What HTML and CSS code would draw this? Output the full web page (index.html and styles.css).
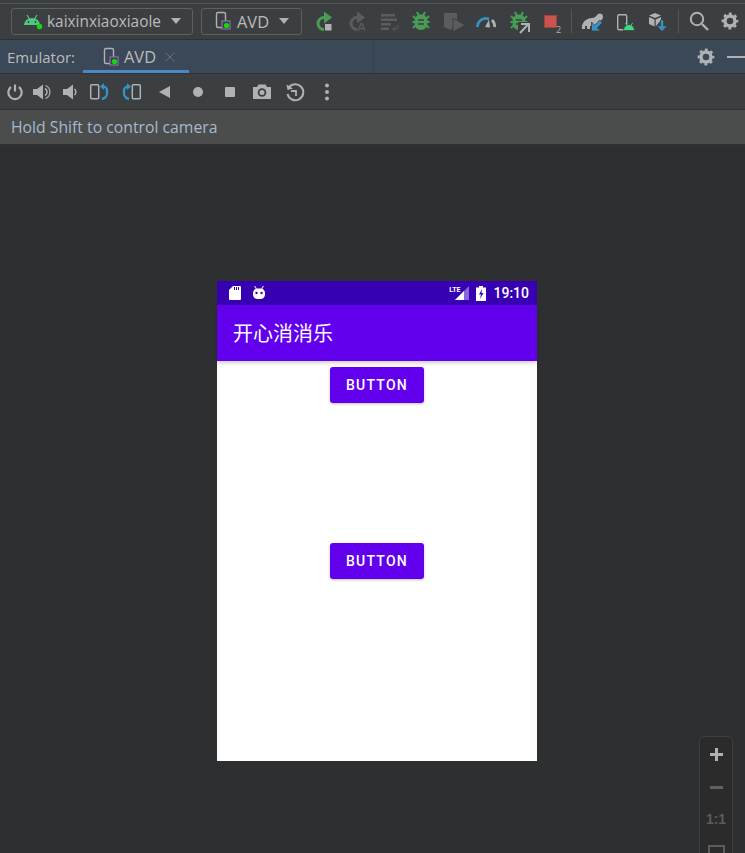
FILE: index.html
```html
<!DOCTYPE html>
<html lang="en">
<head>
  <meta charset="UTF-8" />
  <meta name="viewport" content="width=device-width, initial-scale=1.0" />
  <title>Emulator - AVD</title>
  <link rel="stylesheet" href="styles.css">
</head>
<body>
  <svg class="sprites" width="0" height="0">
    <symbol id="gear" viewBox="0 0 24 24">
      <circle cx="12" cy="12" r="5" fill="none" stroke="currentColor" stroke-width="3.4" />
      <circle cx="12" cy="12" r="7.2" fill="none" stroke="currentColor" stroke-width="2.4" stroke-dasharray="2.83 2.83" stroke-dashoffset="1.4" />
    </symbol>
    <symbol id="device" viewBox="0 0 24 24">
      <rect x="5.500" y="3.500" width="9" height="15" rx="1.500" fill="none" stroke="#afb1b3" stroke-width="1.400" />
      <rect x="11" y="12" width="8" height="8" fill="#3c3f41" stroke="#8a6fb0" stroke-width="1.200" />
      <circle cx="15.500" cy="16.500" r="2.600" fill="#0fdc0f" />
    </symbol>
    <symbol id="bug" viewBox="0 0 24 24">
      <path d="M4 7l3 3M20 7l-3 3M3.500 13h3M20.500 13h-3M4 19l3-3M20 19l-3-3M8 3l2 4M16 3l-2 4" fill="none" stroke="#499c54" stroke-width="2" />
      <path d="M12 5.500c4 0 6.500 2.500 6.500 7.500s-2.500 8-6.500 8-6.500-3-6.500-8 2.500-7.500 6.500-7.500z" fill="#499c54" />
      <path d="M9 11h6M9 15h6" stroke="#3c3f41" stroke-width="1.500" />
    </symbol>
  </svg>

  <div class="top-edge"></div>

  <!-- Main toolbar -->
  <header class="main-toolbar">
    <div class="combo combo-app">
      <svg width="20" height="18" viewBox="0 0 20 18">
        <path d="M1 13a8 7 0 0 1 16 0z" fill="#4fc97f" />
        <path d="M4 3l2.500 4M14 3l-2.500 4" stroke="#4fc97f" stroke-width="1.200" />
        <circle cx="5.500" cy="10" r="1" fill="#3c3f41" />
        <circle cx="12.500" cy="10" r="1" fill="#3c3f41" />
        <circle cx="16.500" cy="14.500" r="2.700" fill="#0fdc0f" />
      </svg>
      <span class="combo-label">kaixinxiaoxiaole</span>
      <span class="caret"></span>
    </div>
    <div class="combo combo-avd">
      <svg class="ico" width="24" height="24"><use href="#device" /></svg>
      <span class="combo-label">AVD</span>
      <span class="caret"></span>
    </div>

    <div class="tools">
      <span class="tool">
        <svg width="24" height="24" viewBox="0 0 24 24">
          <path d="M13 8.500h-1a6 6 0 0 0 0 12" fill="none" stroke="#499c54" stroke-width="3" />
          <path d="M12 2.500l8 6-8 6z" fill="#499c54" />
          <rect x="13" y="15" width="6.500" height="6.500" fill="#afb1b3" />
        </svg>
      </span>
      <span class="tool">
        <svg width="24" height="24" viewBox="0 0 24 24">
          <path d="M13 8.500h-1a6 6 0 0 0 0 12" fill="none" stroke="#5a5d5f" stroke-width="3" />
          <path d="M12 2.500l8 6-8 6z" fill="#5a5d5f" />
          <rect x="12" y="13.500" width="9" height="9" fill="#3c3f41" />
          <path d="M13 22l3-7.500h1l3 7.500M14.200 19.500h4.600" fill="none" stroke="#5a5d5f" stroke-width="1.300" />
        </svg>
      </span>
      <span class="tool">
        <svg width="24" height="24" viewBox="0 0 24 24">
          <path d="M4 5h14v2.500H4zM4 9.500h16V12H4zM4 14h10v2.500H4zM4 18.500h8V21H4z" fill="#5a5d5f" />
          <path d="M21 16v2a2 2 0 0 1-2 2h-3M18 17.500L15.500 20l2.500 2" fill="none" stroke="#5a5d5f" stroke-width="1" />
        </svg>
      </span>
      <span class="tool"><svg width="24" height="24"><use href="#bug" /></svg></span>
      <span class="tool">
        <svg width="24" height="24" viewBox="0 0 24 24">
          <path d="M2 4h13v10l-6 7-7-3z" fill="#5a5d5f" />
          <path d="M11 9l12 7-12 7z" fill="#5a5d5f" stroke="#3c3f41" stroke-width="1" />
        </svg>
      </span>
      <span class="tool">
        <svg width="24" height="24" viewBox="0 0 24 24">
          <path d="M3.500 18a8.500 8.500 0 0 1 11.500-8" fill="none" stroke="#3592c4" stroke-width="2.800" />
          <path d="M18 11a8.500 8.500 0 0 1 2.500 7" fill="none" stroke="#afb1b3" stroke-width="2.800" />
          <path d="M11 18l4-7.500 1 8z" fill="#afb1b3" />
        </svg>
      </span>
      <span class="tool">
        <svg width="24" height="24"><use href="#bug" /></svg>
        <svg class="tool-badge" width="12" height="12" viewBox="0 0 12 12">
          <rect width="12" height="12" fill="#3c3f41" />
          <path d="M3 2h8v8M10 2.500L2 11" fill="none" stroke="#afb1b3" stroke-width="2" />
        </svg>
      </span>
      <span class="tool">
        <span class="stop-square"></span>
        <span class="stop-count">2</span>
      </span>
    </div>
    <span class="sep"></span>
    <div class="tools tools-wide">
      <span class="tool">
        <svg width="24" height="24" viewBox="0 0 24 24">
          <path d="M1 20c-1-6 4-11 10-11 3 0 4-2 6-4 2-1.500 5 0 5 2.500S21 11 19.500 11.500V15l-7 5v-3H9v3H6v-3H4v3z" fill="#afb1b3" />
          <path d="M10.500 22v-9l3.200 3.200 5-5 2.600 2.600-5 5 3.200 3.200z" fill="#3592c4" stroke="#3c3f41" stroke-width=".8" />
        </svg>
      </span>
      <span class="tool">
        <svg width="24" height="24" viewBox="0 0 24 24">
          <rect x="2.700" y="5.700" width="9" height="15" rx="1.500" fill="none" stroke="#afb1b3" stroke-width="1.400" />
          <path d="M8.500 21.500a5.500 6 0 0 1 11 0z" fill="#3ddc84" stroke="#3c3f41" stroke-width=".8" />
          <path d="M10.500 14l1.500 2.500M17.500 14L16 16.500" stroke="#3ddc84" stroke-width="1" />
        </svg>
      </span>
      <span class="tool">
        <svg width="24" height="24" viewBox="0 0 24 24">
          <path d="M6 4l6 2.500L6 9 0 6.500z" fill="#afb1b3" />
          <path d="M0 8l5.500 2.400v7L0 15zM6.700 10.400L12 8v3l-5.300 6.400z" fill="#afb1b3" />
          <path d="M11.500 11h3v6h3.500l-5 5.500-5-5.500h3.500z" fill="#3592c4" stroke="#3c3f41" stroke-width=".6" />
        </svg>
      </span>
    </div>
    <span class="sep sep-right"></span>
    <span class="tool tool-search">
      <svg width="24" height="24" viewBox="0 0 24 24">
        <circle cx="10" cy="10" r="6.200" fill="none" stroke="#afb1b3" stroke-width="2" />
        <path d="M15 15l6 6" stroke="#afb1b3" stroke-width="2.400" />
      </svg>
    </span>
    <span class="tool tool-gear"><svg width="24" height="24"><use href="#gear" /></svg></span>
  </header>

  <!-- Tool window header -->
  <nav class="tab-row">
    <span class="tab-title">Emulator:</span>
    <div class="tab">
      <svg width="24" height="24"><use href="#device" /></svg>
      <span class="tab-label">AVD</span>
      <svg class="tab-close" width="10" height="10" viewBox="0 0 10 10">
        <path d="M.5.500l9 9M9.500.500l-9 9" stroke="#6e7072" stroke-width="1" />
      </svg>
    </div>
    <span class="tab-divider"></span>
    <span class="tab-gear"><svg width="24" height="24"><use href="#gear" /></svg></span>
    <span class="tab-minimize"></span>
  </nav>

  <!-- Emulator controls -->
  <div class="emu-toolbar">
    <span class="emu-btn">
      <svg width="20" height="20" viewBox="0 0 20 20">
        <path d="M6 5a6.700 6.700 0 1 0 8 0" fill="none" stroke="#afb1b3" stroke-width="2.200" />
        <path d="M10 2.500v7" stroke="#afb1b3" stroke-width="2.200" />
      </svg>
    </span>
    <span class="emu-btn">
      <svg width="20" height="20" viewBox="0 0 20 20">
        <path d="M0 7h4l6-4.500v15L4 13H0z" fill="#afb1b3" />
        <path d="M12 6.500a4 4 0 0 1 0 7" fill="none" stroke="#afb1b3" stroke-width="1.500" />
        <path d="M12.500 3.500a7 7 0 0 1 0 13" fill="none" stroke="#afb1b3" stroke-width="1.200" />
      </svg>
    </span>
    <span class="emu-btn">
      <svg width="20" height="20" viewBox="0 0 20 20">
        <path d="M3 7h4l6-4.500v15L7 13H3z" fill="#afb1b3" />
        <path d="M14.500 7a4 4 0 0 1 0 6" fill="none" stroke="#afb1b3" stroke-width="1.500" />
      </svg>
    </span>
    <span class="emu-btn">
      <svg width="24" height="20" viewBox="0 0 24 20">
        <rect x="3.700" y="2.700" width="8" height="14" rx="1" fill="none" stroke="#afb1b3" stroke-width="1.500" />
        <path d="M15 4.500h1a4 4 0 0 1 4 4v2a6 6 0 0 1-5 6.500" fill="none" stroke="#3592c4" stroke-width="2.400" />
        <path d="M17 1v7l-4-3.500z" fill="#3592c4" />
      </svg>
    </span>
    <span class="emu-btn">
      <svg width="24" height="20" viewBox="0 0 24 20">
        <rect x="12.300" y="2.700" width="8" height="14" rx="1" fill="none" stroke="#afb1b3" stroke-width="1.500" />
        <path d="M9 4.500H8a4 4 0 0 0-4 4v2a6 6 0 0 0 5 6.500" fill="none" stroke="#3592c4" stroke-width="2.400" />
        <path d="M7 1v7l4-3.500z" fill="#3592c4" />
      </svg>
    </span>
    <span class="emu-btn">
      <svg width="20" height="20" viewBox="0 0 20 20"><path d="M4 10l11-6v12z" fill="#afb1b3" /></svg>
    </span>
    <span class="emu-btn">
      <svg width="20" height="20" viewBox="0 0 20 20"><circle cx="10" cy="10" r="5" fill="#afb1b3" /></svg>
    </span>
    <span class="emu-btn">
      <svg width="20" height="20" viewBox="0 0 20 20"><rect x="5" y="5" width="10" height="10" rx="1" fill="#afb1b3" /></svg>
    </span>
    <span class="emu-btn">
      <svg width="20" height="20" viewBox="0 0 20 20">
        <path d="M1 5h4l1.500-2.500h7L15 5h4v12H1z" fill="#afb1b3" />
        <circle cx="10" cy="10.500" r="4.300" fill="#3c3f41" />
        <circle cx="10" cy="10.500" r="2.500" fill="#afb1b3" />
      </svg>
    </span>
    <span class="emu-btn">
      <svg width="20" height="20" viewBox="0 0 20 20">
        <path d="M3.500 6a8 8 0 1 1-1 6" fill="none" stroke="#afb1b3" stroke-width="2" />
        <path d="M1.500 2.500l1 5.500 5.500-1.500z" fill="#afb1b3" />
        <path d="M6 9h5v5" fill="none" stroke="#afb1b3" stroke-width="1.800" />
      </svg>
    </span>
    <span class="emu-btn">
      <svg width="20" height="20" viewBox="0 0 20 20">
        <circle cx="10" cy="3.500" r="2" fill="#afb1b3" />
        <circle cx="10" cy="10" r="2" fill="#afb1b3" />
        <circle cx="10" cy="16.500" r="2" fill="#afb1b3" />
      </svg>
    </span>
  </div>

  <div class="hint-bar">Hold Shift to control camera</div>

  <!-- Device screen -->
  <main class="stage">
    <section class="phone">
      <div class="status-bar">
        <svg width="12" height="14" viewBox="0 0 12 14">
          <path d="M4 0h7a1 1 0 0 1 1 1v12a1 1 0 0 1-1 1H1a1 1 0 0 1-1-1V4z" fill="#fff" />
          <path d="M5.500 1v3M7.500 1v3M9.500 1v3" stroke="#3700b3" stroke-width="1" />
        </svg>
        <svg class="status-robot" width="12" height="14" viewBox="0 0 12 14">
          <path d="M1.500 0l2 3M10.500 0l-2 3" stroke="#d8ccf5" stroke-width="1.200" />
          <rect x="0" y="2.500" width="12" height="10.500" rx="4.500" fill="#fff" />
          <circle cx="3.500" cy="7" r="1.200" fill="#3700b3" />
          <circle cx="8.500" cy="7" r="1.200" fill="#3700b3" />
        </svg>
        <span class="status-spacer"></span>
        <span class="status-lte">LTE</span>
        <svg class="status-signal" width="14" height="14" viewBox="0 0 14 14">
          <path d="M14 0v14H0z" fill="#8a66dc" />
          <path d="M9 5v9H0z" fill="#fff" />
        </svg>
        <svg class="status-battery" width="10" height="15" viewBox="0 0 10 15">
          <path d="M3 0h4v1.500h3V15H0V1.500h3z" fill="#fff" />
          <path d="M6 3L3 8.500h2L4 13l3.500-6H5.500z" fill="#3700b3" />
        </svg>
        <span class="status-time">19:10</span>
      </div>
      <div class="app-bar">开心消消乐</div>
      <div class="phone-content">
        <button class="md-button">Button</button>
        <button class="md-button md-button-second">Button</button>
      </div>
    </section>

    <!-- Zoom controls float over the stage -->
    <aside class="zoom-panel">
      <span class="zoom-plus"></span>
      <span class="zoom-minus"></span>
      <span class="zoom-actual">1:1</span>
      <span class="zoom-fit"></span>
    </aside>
  </main>
</body>
</html>
```

FILE: styles.css
```css
/* Basic Reset */
* { margin: 0; padding: 0; box-sizing: border-box; }
html, body { height: 100%; overflow: hidden; }
body {
  font-family: "Open Sans", "Noto Sans", Arial, sans-serif;
  color: #bbbbbb;
  background: #2e2f31;
  display: flex;
  flex-direction: column;
  height: 853px;
}
svg { display: block; flex: none; }
.sprites { position: absolute; }

.top-edge {
  height: 4px;
  background: #3c3f41;
  border-bottom: 1px solid #505254;
}

/* Main toolbar */
.main-toolbar {
  height: 36px;
  background: #3c3f41;
  border-bottom: 1px solid #323232;
  display: flex;
  align-items: center;
  padding: 0 0 1px 11px;
}
.combo {
  height: 27px;
  border: 1px solid #5e6060;
  border-radius: 3px;
  display: flex;
  align-items: center;
  flex: none;
  color: #bbbbbb;
}
.combo-app { width: 182px; padding-left: 11px; margin-right: 8px; font-size: 15.4px; }
.combo-app svg { margin-right: 4px; }
.combo-avd { width: 101px; padding-left: 9px; font-size: 16.4px; }
.combo-avd .ico { margin-right: 2px; }
.caret {
  width: 0;
  height: 0;
  border-left: 5.5px solid transparent;
  border-right: 5.5px solid transparent;
  border-top: 6px solid #afb1b3;
}
.combo-app .caret { margin-left: 10px; }
.combo-avd .caret { margin-left: 10px; }

.tools { display: flex; flex: none; margin-left: 6px; }
.tool {
  width: 32.4px;
  height: 28px;
  display: flex;
  align-items: center;
  justify-content: center;
  position: relative;
  flex: none;
}
.tools-wide { margin-left: 4px; }
.tools-wide .tool { width: 34px; }
.tool-badge { position: absolute; right: 5px; bottom: 1px; }
.stop-square {
  width: 13px;
  height: 13px;
  background: #c75450;
  border: 1px solid #a8403c;
}
.stop-count {
  position: absolute;
  right: 6px;
  bottom: 0;
  font-size: 9px;
  line-height: 10px;
  color: #afb1b3;
}
.sep {
  width: 1px;
  height: 24px;
  background: #515658;
  margin-left: 4px;
  flex: none;
}
.sep-right { margin-left: 0; }
.tool-search { margin-left: 4px; }
.tool-gear { margin-left: -2px; color: #afb1b3; }

/* Tool window header */
.tab-row {
  height: 34px;
  background: #3b4858;
  border-bottom: 1px solid #323232;
  display: flex;
  align-items: center;
  padding-left: 7px;
  font-size: 15px;
  color: #bbbbbb;
}
.tab-title { width: 76px; flex: none; }
.tab {
  width: 106px;
  height: 33px;
  border-bottom: 3px solid #4a88c7;
  display: flex;
  align-items: center;
  flex: none;
  padding: 3px 0 0 16px;
  font-size: 16.4px;
}
.tab-label { margin-left: 1px; }
.tab-close { margin-left: 9px; }
.tab-divider {
  width: 1px;
  height: 33px;
  background: #36424f;
  margin-left: 184px;
  flex: none;
}
.tab-gear { margin-left: 320px; color: #afb1b3; flex: none; }
.tab-minimize {
  width: 18px;
  height: 2px;
  background: #afb1b3;
  margin-left: 9px;
  flex: none;
}

/* Emulator controls */
.emu-toolbar {
  height: 36px;
  background: #3c3f41;
  border-bottom: 1px solid #323232;
  display: flex;
  align-items: center;
}
.emu-btn {
  width: 32.4px;
  display: flex;
  justify-content: center;
  flex: none;
}
.emu-btn:first-child { width: 30px; }
.emu-btn:nth-child(2) { width: 26px; }
.emu-btn:nth-child(3) { width: 28px; }
.emu-btn:nth-child(4) { width: 30px; }
.emu-btn:nth-child(5) { width: 35px; }

.hint-bar {
  height: 35px;
  background: #4b4d4d;
  border-bottom: 1px solid #323232;
  padding-left: 11px;
  line-height: 34px;
  font-size: 15.75px;
  color: #a5b9cf;
}

/* Device screen */
.stage {
  flex: 1;
  padding: 136px 0 0 217px;
  position: relative;
}
.phone {
  width: 320px;
  height: 480px;
  background: #fff;
  display: flex;
  flex-direction: column;
}
.status-bar {
  height: 24px;
  background: #3700b3;
  display: flex;
  align-items: center;
  padding: 0 8px 0 12px;
  color: #fff;
}
.status-robot { margin-left: 12px; }
.status-spacer { flex: 1; }
.status-lte {
  font-family: Roboto, sans-serif;
  font-size: 7px;
  font-weight: 700;
  align-self: flex-start;
  margin: 5px -5px 0 0;
}
.status-battery { margin-left: 7px; }
.status-time {
  font-family: Roboto, sans-serif;
  font-size: 14px;
  font-weight: 500;
  margin-left: 7px;
}
.app-bar {
  height: 56px;
  background: #6200ee;
  color: #fff;
  font-family: "Noto Sans CJK SC", sans-serif;
  font-size: 20px;
  line-height: 56px;
  padding-left: 16px;
  box-shadow: 0 2px 4px rgba(0,0,0,0.2);
}
.phone-content {
  flex: 1;
  display: flex;
  flex-direction: column;
  align-items: center;
  padding-top: 6px;
}
.md-button {
  width: 94px;
  height: 36px;
  background: #6200ee;
  color: #fff;
  border: none;
  border-radius: 3px;
  font-family: Roboto, sans-serif;
  font-size: 14px;
  font-weight: 500;
  letter-spacing: 1.25px;
  text-transform: uppercase;
  box-shadow: 0 1px 3px rgba(0,0,0,0.25);
}
.md-button-second { margin-top: 140px; }

.zoom-panel {
  position: absolute;
  left: 699px;
  top: 591px;
  width: 34px;
  height: 140px;
  background: #2b2b2b;
  border: 1px solid #3c3f41;
  border-radius: 5px;
  display: flex;
  flex-direction: column;
  align-items: center;
  padding-top: 11px;
  color: #5a5c5e;
}
.zoom-plus {
  width: 13px;
  height: 13px;
  background:
    linear-gradient(#afb1b3, #afb1b3) center / 13px 3px no-repeat,
    linear-gradient(#afb1b3, #afb1b3) center / 3px 13px no-repeat;
}
.zoom-minus {
  width: 13px;
  height: 3px;
  background: #5e6062;
  margin-top: 25px;
}
.zoom-actual {
  font-family: "Liberation Sans", sans-serif;
  font-size: 14px;
  font-weight: 700;
  line-height: 15px;
  margin-top: 23px;
}
.zoom-fit {
  width: 17px;
  height: 17px;
  flex: none;
  border: 2px solid #5a5c5e;
  margin-top: 18px;
}
```
